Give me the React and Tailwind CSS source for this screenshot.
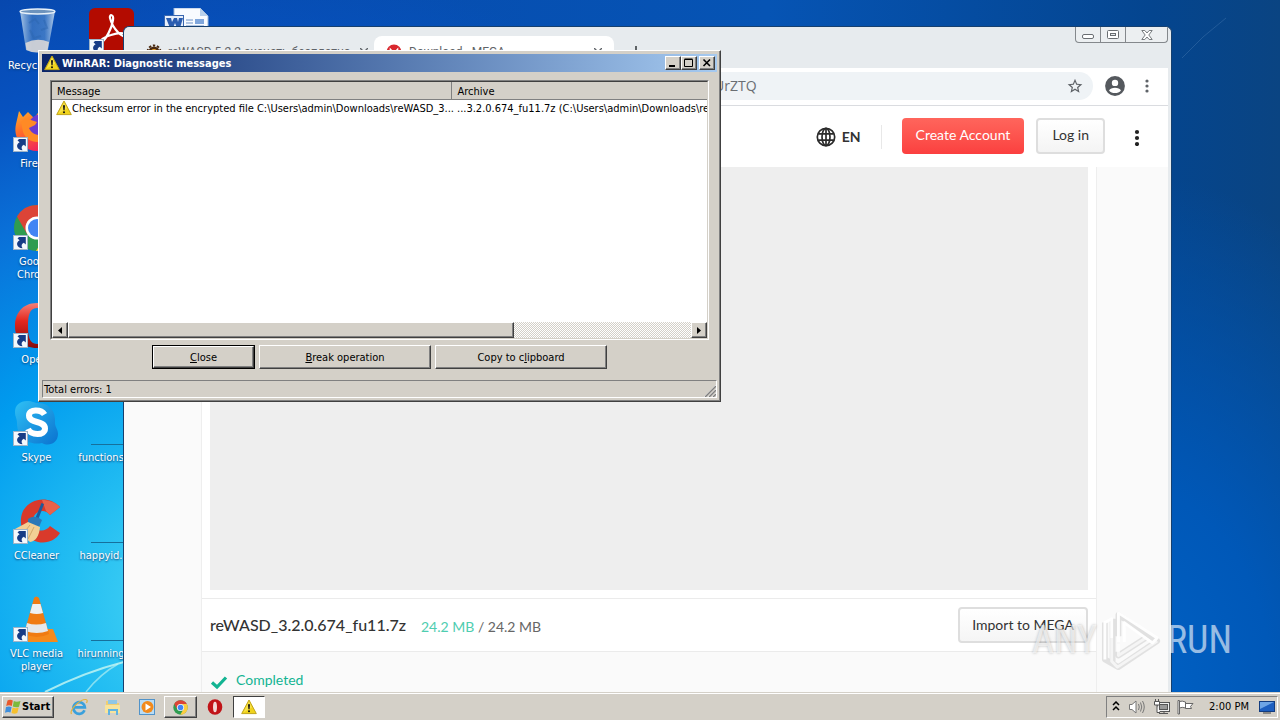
import React from "react";

const UI = "font-['DejaVu_Sans_Condensed','DejaVu_Sans',sans-serif]";
const OUTSET =
  "border border-t-white border-l-white border-r-[#404040] border-b-[#404040] shadow-[inset_-1px_-1px_0_#808080]";

function Warning({ className }) {
  return (
    <svg viewBox="0 0 16 16" className={className} aria-hidden="true">
      <path d="M8 1 L15.3 14.6 H0.7 Z" fill="#f0d31c" stroke="#c0a51c" strokeWidth="1" strokeLinejoin="round" />
      <path d="M8 2.6 L11 8.5 L2.4 13.6 Z" fill="#fff27a" opacity=".5" />
      <path d="M7 5.2h2l-.4 5H7.4z" fill="#111" />
      <rect x="7" y="11.2" width="2" height="2" rx="1" fill="#111" />
    </svg>
  );
}

function Shortcut() {
  return (
    <g>
      <rect x="0.5" y="31.5" width="14" height="14" fill="#f4f8fc" stroke="#9fb4c8" />
      <path d="M4.500 34.500 L6 33 H12.800 V40.500 L10.800 38.700 C8.400 39.800 8 41.500 9.500 44.300 C3.800 43.500 2.200 39 6.600 36.200 Z" fill="#173c86" />
    </g>
  );
}

function RecycleArt() {
  return (
    <svg viewBox="0 0 48 48" className="size-12" aria-hidden="true">
      <defs>
        <linearGradient id="bin" x1="0" x2="1">
          <stop offset="0" stopColor="#c5dcf0" stopOpacity=".85" />
          <stop offset=".35" stopColor="#4f86c8" stopOpacity=".6" />
          <stop offset=".7" stopColor="#5e93cf" stopOpacity=".6" />
          <stop offset="1" stopColor="#d5e6f5" stopOpacity=".85" />
        </linearGradient>
      </defs>
      <path d="M7 3 L13 42 Q24 47 35 42 L42 3 Z" fill="url(#bin)" />
      <path d="M12.5 35 Q24 29 36 34 L34.6 42 Q24 47 13.4 42 Z" fill="#e3ddd8" opacity=".85" />
      <path d="M16 15 l6-4 4 5 M31 12 l3 8-6 2 M17 22 l4 8 7-2" fill="none" stroke="#2c65b0" strokeWidth="2" opacity=".5" />
      <ellipse cx="24.5" cy="3.5" rx="17.5" ry="2.500" fill="#6d93bd" stroke="#e8f1f9" strokeWidth="1.3" />
    </svg>
  );
}

function AcrobatArt() {
  return (
    <svg viewBox="0 0 48 48" className="size-12" aria-hidden="true">
      <rect x="0" y="0" width="45" height="46" rx="6" fill="#b30b00" />
      <path d="M21 10 C20 6 25 6 24 12 C23 20 17 31 13 34 C9 35 12 30 22 27 C31 24 39 25 37 28 C34 30 24 22 21 10 Z" fill="none" stroke="#fff" strokeWidth="2.2" />
      <Shortcut />
    </svg>
  );
}

function WordArt() {
  return (
    <svg viewBox="0 0 48 48" className="size-12" aria-hidden="true">
      <path d="M10 0 H36 L44 8 V47 H10 Z" fill="#f8fbff" stroke="#9db8da" />
      <path d="M36 0 V8 H44 Z" fill="#b7d0ec" />
      <rect x="0.500" y="7.500" width="19" height="22" fill="#e7effa" stroke="#3a67b0" />
      <path d="M2 10h5l1 4 2-4h3l1 4 1-4h4l-3 10h-3l-2-5-2 5H6z" fill="#2b5db0" />
      <path d="M22 12h7M22 15h7M22 18h18" stroke="#6d92c8" />
      <rect x="31" y="11" width="9" height="5" fill="#7fa6dc" />
    </svg>
  );
}

function FirefoxArt() {
  return (
    <svg viewBox="0 0 48 48" className="size-12" aria-hidden="true">
      <defs>
        <linearGradient id="fox" x1="0" y1="0" x2=".5" y2="1">
          <stop offset="0" stopColor="#ffb52b" />
          <stop offset=".5" stopColor="#ff6a2a" />
          <stop offset="1" stopColor="#f0245e" />
        </linearGradient>
      </defs>
      <path d="M3 18 L6 5 L10 11 L15 6 L21 12 L28 3 C40 4 47 16 45 27 C42 40 33 46 23 45 C8 44 0 31 3 18 Z" fill="url(#fox)" />
      <circle cx="29" cy="22" r="14" fill="#6a3bd0" />
      <path d="M8 16 L12 12 L24 16 L22 19 L16 22 C19 30 30 31 36 27 C32 40 14 38 10 26 Z" fill="#ff8a25" />
      <Shortcut />
    </svg>
  );
}

function ChromeShape() {
  return (
    <g>
      <circle cx="24" cy="24" r="23" fill="#2f9c50" />
      <path d="M4 12.6 A23 23 0 0 1 44 12.6 L24 13 L14 30 Z" fill="#dc4437" />
      <path d="M44 12.6 A23 23 0 0 1 23 47 L34 29 A11 11 0 0 0 24 13 Z" fill="#fccd3f" />
      <circle cx="24" cy="24" r="11.5" fill="#fff" />
      <circle cx="24" cy="24" r="9" fill="#4285f4" />
    </g>
  );
}

function ChromeArt() {
  return (
    <svg viewBox="0 0 48 48" className="size-12" aria-hidden="true">
      <ChromeShape />
      <Shortcut />
    </svg>
  );
}

function OperaArt() {
  return (
    <svg viewBox="0 0 48 48" className="size-12" aria-hidden="true">
      <defs>
        <linearGradient id="op" x1="0" y1="0" x2="0" y2="1">
          <stop offset="0" stopColor="#f58078" />
          <stop offset=".4" stopColor="#e3271d" />
          <stop offset="1" stopColor="#850b0b" />
        </linearGradient>
      </defs>
      <path fillRule="evenodd" d="M24 1 C9 1 2 12 2 24 C2 37 10 46 24 46 C38 46 46 37 46 24 C46 12 39 1 24 1 Z M24 6 C32 6 33 15 33 24 C33 33 32 42 24 42 C16 42 15 33 15 24 C15 15 16 6 24 6 Z" fill="url(#op)" />
      <Shortcut />
    </svg>
  );
}

function SkypeArt() {
  return (
    <svg viewBox="0 0 48 48" className="size-12" aria-hidden="true">
      <defs>
        <linearGradient id="sk" x1="0" y1="0" x2="1" y2="1">
          <stop offset="0" stopColor="#2fc0f5" />
          <stop offset="1" stopColor="#0a72cf" />
        </linearGradient>
      </defs>
      <path d="M14 1 C20 1 21 3 25 3 C37 3 43 12 42 23 C42 27 45 29 45 34 C45 43 36 47 29 43 C14 46 4 36 4 23 C4 18 2 17 2 12 C2 5 7 1 14 1 Z" fill="url(#sk)" />
      <path d="M31.500 14.500 C28 9 16 9 16 15.500 C16 24 32 20 32 28.500 C32 36 18 35.500 15 29" fill="none" stroke="#fff" strokeWidth="6" />
      <Shortcut />
    </svg>
  );
}

function CCleanerArt() {
  return (
    <svg viewBox="0 0 48 48" className="size-12" aria-hidden="true">
      <path d="M47 9 C36 -3 17 0 10 13 C4 27 11 41 25 44 C34 46 43 42 47 35 L37 28 C32 35 21 34 20 24 C19 14 31 9 37 17 Z" fill="#d93a2b" />
      <path d="M47 9 C42 4 36 2 29 2 L33 13 L37 17 Z" fill="#e9624b" />
      <path d="M28.500 5 L31 6 L25 22 L22 21 Z" fill="#1d5b9e" />
      <path d="M15 21 Q22 16 29 22 L26 29 L15 26 Z" fill="#2b78b8" />
      <path d="M15 24 L27 29 C26 38 23 43 17 44 L2 31 Z" fill="#f2cf95" />
      <path d="M17 27 L9 37 M21 29 L15 41" stroke="#d4a768" />
      <Shortcut />
    </svg>
  );
}

function VlcArt() {
  return (
    <svg viewBox="0 0 48 48" className="size-12" aria-hidden="true">
      <path d="M7 33 H40 L45 46 H8 Z" fill="#f58a1c" />
      <path d="M21 2 Q23 -1 26 2 L36 38 Q24 44 11 38 Z" fill="#f07b12" />
      <path d="M19.500 8 H27.500 L30 17 Q24 19 17 17 Z" fill="#eef0f1" />
      <path d="M14 27 Q23 30 33 27 L35 35 Q24 39 12 35 Z" fill="#e6e8ea" />
      <Shortcut />
    </svg>
  );
}

const columnOne = [
  ["Recycle Bin", RecycleArt],
  ["Firefox", FirefoxArt],
  ["Google Chrome", ChromeArt],
  ["Opera", OperaArt],
  ["Skype", SkypeArt],
  ["CCleaner", CCleanerArt],
  ["VLC media player", VlcArt],
];

const label = "text-center text-[11px] leading-[13px] text-white [text-shadow:0_1px_2px_#0b3a70]";

function Desktop() {
  return (
    <div className="flex">
      <div className="flex w-[73px] flex-col">
        {columnOne.map(([name, Art]) => (
          <div key={name} className="flex h-[98px] flex-col items-center gap-[3px] pt-2">
            <Art />
            <span className={`${label} w-16`}>{name}</span>
          </div>
        ))}
      </div>
      <div className="flex w-[76px] flex-col pl-1">
        <div className="flex h-[392px] flex-col items-center pt-2">
          <AcrobatArt />
        </div>
        {["functions", "happyid.", "hirunning"].map((name) => (
          <div key={name} className="flex h-[98px] w-12 flex-col items-end justify-start pt-[52px]">
            <span className="mb-[6px] h-px w-[34px] bg-[#16709c]" />
            <span className={`${label} w-full`}>{name}</span>
          </div>
        ))}
      </div>
      <div className="flex w-[78px] justify-center pt-2">
        <WordArt />
      </div>
    </div>
  );
}

function TabClose() {
  return (
    <button aria-label="Close tab" className="flex size-4 shrink-0 items-center justify-center">
      <svg viewBox="0 0 8 8" className="size-2" aria-hidden="true">
        <path d="M0 0L8 8M8 0L0 8" stroke="#5f6368" strokeWidth="1.4" />
      </svg>
    </button>
  );
}

function Browser() {
  return (
    <section className="absolute top-[26px] right-[108px] bottom-0 left-[123px] flex flex-col overflow-hidden rounded-t-md border-x border-t border-[#16406f] bg-[#e7ebee] pr-[3px] font-['Lato',sans-serif] text-[#333]">
      <div className="flex h-[41px] shrink-0 items-start pl-[10px]">
        <div className="flex flex-1 items-end self-stretch font-['Roboto',sans-serif] text-xs text-[#5f6368]">
          <div className="flex h-8 w-60 items-center gap-[6px] pr-2 pl-3">
            <svg viewBox="0 0 16 16" className="size-4 shrink-0" aria-hidden="true">
              <circle cx="8" cy="8" r="5.500" fill="#4a2a12" />
              <circle cx="8" cy="8" r="6.500" fill="none" stroke="#4a2a12" strokeWidth="2" strokeDasharray="2.4 1.700" />
              <circle cx="8" cy="8" r="3" fill="#f0a72b" />
            </svg>
            <span className="w-[182px] shrink-0 whitespace-nowrap">reWASD 5.2.2 скачать бесплатно</span>
            <TabClose />
          </div>
          <div className="flex h-8 w-60 items-center gap-[7px] rounded-t-lg bg-white pr-2 pl-3">
            <svg viewBox="0 0 16 16" className="size-4 shrink-0" aria-hidden="true">
              <circle cx="8" cy="8" r="7.500" fill="#d9272e" />
              <path d="M4.500 11V5.500L8 9l3.500-3.500V11" fill="none" stroke="#fff" strokeWidth="1.600" />
            </svg>
            <span className="flex-1">Download - MEGA</span>
            <TabClose />
          </div>
          <button aria-label="New tab" className="flex h-8 w-11 items-center justify-center">
            <svg viewBox="0 0 12 12" className="size-3" aria-hidden="true">
              <path d="M6 0V12M0 6H12" stroke="#3c4043" strokeWidth="1.600" />
            </svg>
          </button>
        </div>
        <div className="flex h-4 rounded-b border border-t-0 border-[#84888c] bg-[#eceff1]">
          <button aria-label="Minimize" className="flex w-6 items-center justify-center">
            <svg viewBox="0 0 12 12" className="size-3" aria-hidden="true"><rect x=".5" y="5.500" width="11" height="4" rx="1.500" fill="#fff" stroke="#6a6e72" /></svg>
          </button>
          <button aria-label="Restore" className="flex w-[26px] items-center justify-center border-x border-[#84888c]">
            <svg viewBox="0 0 12 12" className="size-3" aria-hidden="true"><rect x=".5" y="1.500" width="11" height="8" rx="1" fill="#fff" stroke="#6a6e72" /><rect x="3.500" y="4.500" width="5" height="2" fill="#e7ebee" stroke="#6a6e72" /></svg>
          </button>
          <button aria-label="Close window" className="flex w-[41px] items-center justify-center">
            <svg viewBox="0 0 12 12" className="size-3" aria-hidden="true"><path d="M.8 1.500h3L6 4l2.200-2.500h3L7.800 6l3.400 4.500h-3L6 8l-2.200 2.500h-3L4.200 6z" fill="#fff" stroke="#6a6e72" strokeWidth=".9" /></svg>
          </button>
        </div>
      </div>

      <div className="flex h-[38px] shrink-0 items-center border-b border-[#dadce0] bg-white pr-3 pb-px pl-[116px]">
        <div className="flex h-7 flex-1 items-center rounded-full bg-[#eff3f6] pr-[10px]">
          <input aria-label="Address" readOnly value="UrZTQ" className="min-w-0 flex-1 bg-transparent pl-[474px] font-['Open_Sans',sans-serif] text-sm text-[#6a6e73] outline-none" />
          <button aria-label="Bookmark this page">
            <svg viewBox="0 0 24 24" className="size-4" fill="#5f6368" aria-hidden="true">
              <path d="M23 9.240l-7.900-.7L12 1.300 8.900 8.550 1 9.240l6 5.200L5.200 22.200 12 18.100l6.800 4.100-1.800-7.760zM12 15.900l-4.100 2.470 1.090-4.660-3.610-3.130 4.760-.41L12 5.780l1.860 4.390 4.760.41-3.610 3.130 1.090 4.660z" />
            </svg>
          </button>
        </div>
        <div className="flex items-center gap-3 pl-[11px]">
          <button aria-label="Profile">
            <svg viewBox="0 0 20 20" className="size-[22px]" aria-hidden="true">
              <circle cx="10" cy="10" r="9" fill="#55595e" />
              <circle cx="10" cy="7.200" r="2.900" fill="#fff" />
              <path d="M4.600 14 C6 10.800 14 10.800 15.400 14 C13 17.200 7 17.200 4.600 14 Z" fill="#fff" />
            </svg>
          </button>
          <button aria-label="Browser menu">
            <svg viewBox="0 0 18 18" className="size-[18px]" fill="#5f6368" aria-hidden="true"><circle cx="9" cy="4" r="1.600" /><circle cx="9" cy="9" r="1.600" /><circle cx="9" cy="14" r="1.600" /></svg>
          </button>
        </div>
      </div>

      <header className="flex h-[61px] shrink-0 items-center justify-end bg-white pr-[22px]">
        <button className="flex items-center gap-[6px] text-sm font-bold text-[#333]">
          <svg viewBox="0 0 20 20" className="size-5" fill="none" stroke="#2b2b2b" strokeWidth="1.700" aria-hidden="true">
            <circle cx="10" cy="10" r="8.700" /><ellipse cx="10" cy="10" rx="4" ry="8.700" /><path d="M2.200 6.800H17.800M2.200 13.200H17.800M10 1.300V18.700" />
          </svg>
          EN
        </button>
        <span className="mx-5 h-6 w-px bg-[#e8e8e8]" />
        <button className="mb-px h-9 rounded bg-linear-to-b from-[#ff655c] to-[#fb3f3f] px-[14px] pb-[2px] text-sm text-white">Create Account</button>
        <button className="mb-px ml-3 h-9 rounded-sm border-2 border-[#dedede] bg-linear-to-b from-white to-[#f4f4f4] px-[14px] pb-[2px] text-sm">Log in</button>
        <button aria-label="Page menu" className="ml-[23px]">
          <svg viewBox="0 0 18 18" className="size-[18px]" fill="#222" aria-hidden="true"><circle cx="9" cy="4" r="2.100" /><circle cx="9" cy="10" r="2.100" /><circle cx="9" cy="16" r="2.100" /></svg>
        </button>
      </header>

      <main className="flex min-h-0 flex-1 bg-[#fafafa] pr-[71px] pl-[77px]">
        <div className="flex flex-1 flex-col border-x border-[#eee] bg-white">
          <div className="mx-2 mb-2 flex-1 bg-[#eee]" />
          <div className="flex h-[54px] items-center border-y border-[#ebebeb] px-2">
            <h1 className="pb-px text-base font-medium">reWASD_3.2.0.674_fu11.7z</h1>
            <p className="flex-1 pt-1 pl-[15px] text-sm text-[#666]"><span className="text-[#4fcdb0]">24.2 MB</span> / 24.2 MB</p>
            <button className="h-9 rounded-sm border-2 border-[#dedede] bg-linear-to-b from-white to-[#f5f5f5] px-3 pb-px text-sm">Import to MEGA</button>
          </div>
          <div className="flex h-10 items-center gap-2 bg-[#fafafa] px-2 pt-[18px] text-sm text-[#13b492]">
            <svg viewBox="0 0 18 16" className="mt-1 h-4 w-[18px]" aria-hidden="true"><path d="M2 7.500L7 12L16 2.500" fill="none" stroke="#13b492" strokeWidth="3.200" /></svg>
            <span className="mb-[2px]">Completed</span>
          </div>
        </div>
      </main>
    </section>
  );
}

function CaptionButton({ name, children, className = "" }) {
  return (
    <button aria-label={name} className={`flex h-[14px] w-4 items-center justify-center bg-[#d4d0c8] ${OUTSET} ${className}`}>
      <svg viewBox="0 0 10 10" className="size-[10px]" fill="none" stroke="#000" aria-hidden="true">{children}</svg>
    </button>
  );
}

function Dialog() {
  return (
    <section role="dialog" aria-label="Diagnostic messages" className={`absolute top-[50px] left-[38px] flex h-[352px] w-[683px] flex-col bg-[#d4d0c8] p-[3px] text-[11px] leading-[13px] text-black ${OUTSET}`}>
      <header className="flex h-[18px] shrink-0 items-center bg-linear-to-r from-[#0a246a] to-[#a6caf0] px-[2px] text-white">
        <Warning className="mr-[2px] size-4" />
        <h2 className="flex-1 font-bold">WinRAR: Diagnostic messages</h2>
        <CaptionButton name="Minimize"><path d="M1 8H7" strokeWidth="2" /></CaptionButton>
        <CaptionButton name="Maximize"><path d="M.5 1.500H8.500V8.500H.5ZM.5 1H8.500" /></CaptionButton>
        <CaptionButton name="Close dialog" className="ml-[2px]"><path d="M1.500 1.500L8 8M8 1.500L1.500 8" strokeWidth="1.600" /></CaptionButton>
      </header>

      <div className="mx-2 mt-2 flex h-[260px] shrink-0 flex-col border border-t-[#808080] border-r-white border-b-white border-l-[#808080]">
        <div className="flex min-h-0 flex-1 flex-col border border-t-[#404040] border-r-[#d4d0c8] border-b-[#d4d0c8] border-l-[#404040] bg-white">
          <div className="min-h-0 flex-1 overflow-hidden">
            <table className="w-full table-fixed border-collapse text-left">
              <thead>
                <tr className="h-[17px] bg-[#d4d0c8]">
                  <th className="w-[399px] border-r border-b border-[#808080] px-[5px] pt-[2px] pb-0 font-normal">Message</th>
                  <th className="border-b border-l border-b-[#808080] border-l-white px-[6px] pt-[2px] pb-0 font-normal">Archive</th>
                </tr>
              </thead>
              <tbody>
                <tr className="h-[18px] whitespace-nowrap">
                  <td className="p-0 pl-1">
                    <span className="flex items-center">
                      <Warning className="size-4 shrink-0" />
                      Checksum error in the encrypted file C:\Users\admin\Downloads\reWASD_3...
                    </span>
                  </td>
                  <td className="p-0 pl-[6px]">...3.2.0.674_fu11.7z (C:\Users\admin\Downloads\re</td>
                </tr>
              </tbody>
            </table>
          </div>
          <div className="flex h-4 shrink-0 bg-[#eae8e4] bg-[repeating-conic-gradient(#d4d0c8_0_25%,#fff_0_50%)] bg-size-[2px_2px]">
            <button aria-label="Scroll left" className={`flex w-4 items-center justify-center bg-[#d4d0c8] ${OUTSET}`}>
              <svg viewBox="0 0 4 7" className="h-[7px] w-1" aria-hidden="true"><path d="M4 0V7L0 3.500Z" /></svg>
            </button>
            <div className={`w-[446px] bg-[#d4d0c8] ${OUTSET}`} />
            <div className="flex-1" />
            <button aria-label="Scroll right" className={`flex w-4 items-center justify-center bg-[#d4d0c8] ${OUTSET}`}>
              <svg viewBox="0 0 4 7" className="h-[7px] w-1" aria-hidden="true"><path d="M0 0V7L4 3.500Z" /></svg>
            </button>
          </div>
        </div>
      </div>

      <div className="flex shrink-0 items-center gap-1 pt-[5px] pl-[110px]">
        <div className="border border-black">
          <button className={`block h-[22px] w-[101px] ${OUTSET}`}><u>C</u>lose</button>
        </div>
        <button className={`h-6 w-[172px] ${OUTSET}`}><u>B</u>reak operation</button>
        <button className={`h-6 w-[172px] ${OUTSET}`}>Copy to c<u>l</u>ipboard</button>
      </div>

      <footer className="mt-auto flex h-[18px] shrink-0 items-center justify-between border border-t-[#808080] border-r-white border-b-white border-l-[#808080] pl-px">
        <span>Total errors: 1</span>
        <svg viewBox="0 0 12 12" className="mt-1 size-3" fill="none" aria-hidden="true">
          <path d="M0 12L12 0M4 12L12 4M8 12L12 8" stroke="#fff" />
          <path d="M1 12L12 1M5 12L12 5M9 12L12 9" stroke="#808080" strokeWidth="1.500" />
        </svg>
      </footer>
    </section>
  );
}

function Watermark() {
  return (
    <div className="pointer-events-none absolute right-[48px] bottom-[16px] flex items-center gap-1 font-['Roboto_Condensed','Liberation_Sans_Narrow','Open_Sans_Condensed',sans-serif] text-[38px] leading-[72px] text-white/60">
      <span className="[text-shadow:0_0_3px_#0004]">ANY</span>
      <svg viewBox="0 0 64 72" className="h-[70px] w-[62px]" fill="none" stroke="#fff" strokeLinejoin="round" aria-hidden="true">
        <g stroke="#aaa" strokeOpacity=".3" strokeWidth="6">
          <path d="M4 18V56L18 64L58 37L18 10V32M12 14V60M18 48V52L46 34" />
        </g>
        <g strokeOpacity=".95" strokeWidth="3">
          <path d="M4 56V18L11 14V34M18 38V8L58 34L53 39L24 18V38" />
          <path d="M11 34V58L17 64L58 37M18 40V52L46 34" strokeOpacity=".65" />
        </g>
      </svg>
      <span>RUN</span>
    </div>
  );
}

function Taskbar() {
  return (
    <footer className="flex h-7 shrink-0 items-center border-t border-[#d4d0c8] bg-[#d4d0c8] px-[2px] text-[11px] text-black shadow-[inset_0_1px_0_#fff]">
      <button className={`mt-px flex h-[22px] w-[52px] items-center gap-px pl-[2px] font-bold ${OUTSET}`}>
        <svg viewBox="0 0 16 16" className="size-4 shrink-0" aria-hidden="true">
          <path d="M2.500 1.500Q5 0 7.800 1.500L6.800 7Q4 5.700 1.200 7Z" fill="#e9592b" />
          <path d="M8.800 2Q11.500 3.500 15.500 2L14 7.800Q11 9 7.800 7.600Z" fill="#7cba3d" />
          <path d="M1 8Q4 6.800 6.600 8L5.500 13.600Q3 12.500 0 13.800Z" fill="#3f8fdc" />
          <path d="M7.600 8.500Q10.500 9.800 13.700 8.500L12.300 14Q9.500 15.300 6.500 14Z" fill="#f6c02e" />
        </svg>
        Start
      </button>
      <nav className="mt-px flex flex-1 items-center pl-2">
        <button aria-label="Internet Explorer" className="flex w-[34px] justify-center">
          <svg viewBox="0 0 18 18" className="size-[18px]" fill="none" aria-hidden="true">
            <path d="M14.500 12.200A5.800 5.800 0 1 1 14.900 9.400H4" stroke="#3aa0dc" strokeWidth="2.600" />
            <path d="M1.500 16C-1 12 10 1 16 1.500C18 2 17 4 16.500 5" stroke="#e3b23c" strokeWidth="1.200" />
          </svg>
        </button>
        <button aria-label="File Explorer" className="flex w-[34px] justify-center">
          <svg viewBox="0 0 18 18" className="size-[18px]" aria-hidden="true">
            <path d="M2 3H7L8 5H15V15H2Z" fill="#efce73" /><path d="M4 2H13V6H4Z" fill="#8fc7e5" /><path d="M1 7H16V15H1Z" fill="#f8e49c" /><path d="M4 17V11H14V17H12V13H6V17Z" fill="#62b4e0" />
          </svg>
        </button>
        <button aria-label="Media Player" className="flex w-[34px] justify-center">
          <svg viewBox="0 0 18 18" className="size-[18px]" aria-hidden="true">
            <rect x="1.500" y="1.500" width="15" height="15" fill="#b9dcf5" stroke="#5193c9" /><circle cx="9.500" cy="9" r="6" fill="#f28a1c" /><path d="M7.500 5.500V12.500L13 9Z" fill="#fff" />
          </svg>
        </button>
        <button aria-label="Google Chrome" className={`flex h-[22px] w-[33px] items-center justify-center ${OUTSET}`}>
          <svg viewBox="0 0 48 48" className="size-[15px]" aria-hidden="true"><ChromeShape /></svg>
        </button>
        <button aria-label="Opera" className="flex w-9 justify-center">
          <svg viewBox="0 0 48 48" className="size-4" aria-hidden="true">
            <ellipse cx="24" cy="24" rx="22" ry="23" fill="#c11418" /><ellipse cx="24" cy="24" rx="6" ry="16" fill="#f2d9d6" />
          </svg>
        </button>
        <button aria-label="WinRAR" className="flex h-[22px] w-8 items-center justify-center border border-t-[#404040] border-r-white border-b-white border-l-[#404040] bg-white">
          <Warning className="size-4" />
        </button>
      </nav>
      <div className="mt-px flex h-[22px] w-[172px] items-center border border-t-[#808080] border-r-white border-b-white border-l-[#808080] pr-[2px] pl-1">
        <button aria-label="Show hidden icons" className="mr-[7px]">
          <svg viewBox="0 0 10 12" className="h-3 w-[10px]" fill="none" stroke="#000" strokeWidth="1.500" aria-hidden="true"><path d="M2 4L5 1L8 4M2 9L5 6L8 9" /></svg>
        </button>
        <svg viewBox="0 0 18 16" className="mr-[7px] h-4 w-[18px]" fill="none" stroke="#777" aria-hidden="true">
          <path d="M1.500 5.500H4L8 2V14L4 10.500H1.500Z" fill="#fff" /><path d="M10.500 5Q12 8 10.500 11M12.500 3.500Q15 8 12.500 12.500M14.500 2Q18 8 14.500 14" />
        </svg>
        <svg viewBox="0 0 18 16" className="mr-[6px] h-4 w-[18px]" fill="none" stroke="#555" aria-hidden="true">
          <rect x="4.500" y="3.500" width="12" height="9" fill="#eee" /><rect x="6.500" y="5.500" width="8" height="5" fill="#999" /><path d="M6 14.500H15M11 12V14" /><path d="M1.500 2.500H6.500V6H1.500ZM2.500 0V2M5.500 0V2M4 6V13.500H7" fill="#fff" />
        </svg>
        <svg viewBox="0 0 18 16" className="h-4 w-[18px]" stroke="#666" fill="#fff" aria-hidden="true">
          <path d="M1 1.500H2.500V15H1ZM2.500 2.500Q5 1.500 8.500 3V9Q5 7.700 2.500 9ZM8.500 4.500H16L13.500 7.500L14.500 9.500H8.500Z" />
        </svg>
        <span className="flex-1 pl-1 text-center">2:00 PM</span>
        <svg viewBox="0 0 16 14" className="h-[14px] w-4" aria-hidden="true">
          <rect x=".5" y="1.500" width="15" height="10" fill="#1d5fc0" stroke="#123c80" /><path d="M1 2H15L1 9Z" fill="#6ea5e6" /><path d="M4 13H12" stroke="#444" />
        </svg>
      </div>
    </footer>
  );
}

export default function App() {
  return (
    <div className={`flex h-screen min-h-[640px] flex-col overflow-hidden bg-[#004490] ${UI}`}>
      <div className="relative min-h-0 flex-1 overflow-hidden bg-[radial-gradient(ellipse_700px_640px_at_220px_600px,#55dcf5_0%,#22bdf2_22%,#009cef_42%,#0a70d8_65%,#0752c0_82%,transparent_100%),radial-gradient(ellipse_380px_520px_at_1120px_100%,#0062c6_0%,#0058b8_40%,transparent_100%),linear-gradient(90deg,#0747ad_0%,#0654b4_60%,#04458f_90%,#0a4482_100%)]">
        <svg viewBox="0 0 124 92" className="absolute bottom-0 left-0 h-[92px] w-[124px]" fill="none" stroke="#c8f7f2" aria-hidden="true">
          <path d="M45 92Q85 72 124 62" strokeWidth="2" opacity=".8" />
          <path d="M86 92Q100 74 118 64" strokeWidth="1.500" opacity=".6" />
        </svg>
        <svg viewBox="0 0 108 92" className="absolute top-0 right-0 h-[92px] w-[108px]" fill="none" stroke="#5f8fc0" aria-hidden="true">
          <path d="M10 58Q30 36 54 18" opacity=".3" />
        </svg>
        <Desktop />
        <Browser />
        <Dialog />
        <Watermark />
      </div>
      <Taskbar />
    </div>
  );
}
